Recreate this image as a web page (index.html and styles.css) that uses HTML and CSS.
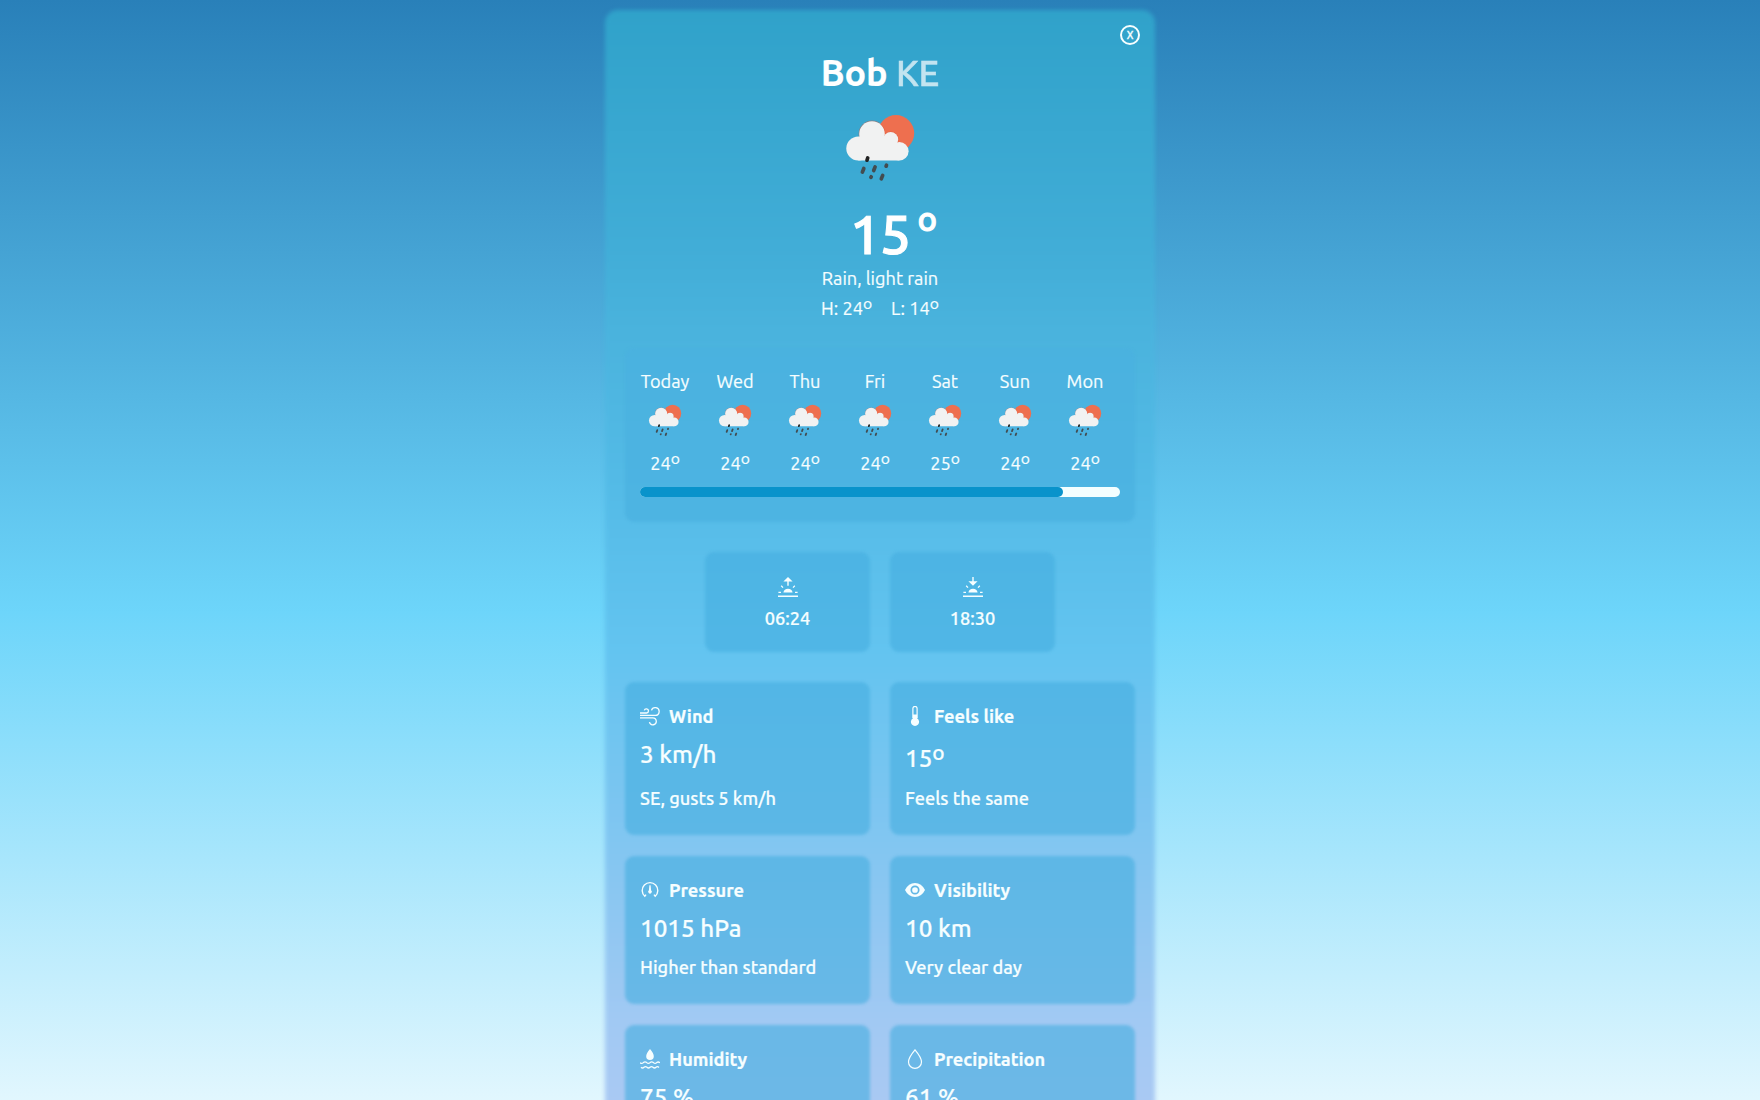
FILE: index.html
```html
<!DOCTYPE html>
<html lang="en">
<head>
<meta charset="utf-8">
<title>Weather</title>
<link rel="stylesheet" href="styles.css">
</head>
<body>
<svg class="sprite" aria-hidden="true">
  <symbol id="rain" viewBox="0 0 80 80">
    <circle cx="56" cy="28.3" r="18.2" fill="#ee6f4f"/>
    <g fill="#d9583a" opacity=".5"><circle cx="32" cy="29" r="13.4"/><circle cx="50.7" cy="34.5" r="8"/></g>
    <g fill="#f1f2f2"><circle cx="32" cy="29" r="12.8"/><circle cx="18.3" cy="43.4" r="12"/><circle cx="50.7" cy="34.5" r="7.5"/><circle cx="59.4" cy="46.2" r="9.2"/><path d="M18.3 34l22-4 6 2 10 5 3 18.4h-41z"/></g>
    <g stroke="#434c50" stroke-width="3.7" stroke-linecap="round"><path d="M27.7 53l-.7 2.2" stroke="#222"/><path d="M23.8 63.5l-1.4 3.6M35.1 61.9l-1.4 3.6M46.5 60.2l-.4 1M31.2 71.8l-.3.6M42.7 70.4l-1.4 3.4"/></g>
  </symbol>
</svg>
<main class="panel">
  <button class="close" aria-label="Close">X</button>
  <header class="summary">
    <h1 class="place">Bob <span class="country">KE</span></h1>
    <svg class="hero-icon"><use href="#rain"/></svg>
    <div class="temp">15<span class="deg">o</span></div>
    <p class="desc">Rain, light rain</p>
    <p class="range"><span>H: 24<sup>o</sup></span><span>L: 14<sup>o</sup></span></p>
  </header>
  <section class="box forecast">
    <div class="days">
      <div class="day"><span>Today</span><svg><use href="#rain"/></svg><span class="num">24<sup>o</sup></span></div>
      <div class="day"><span>Wed</span><svg><use href="#rain"/></svg><span class="num">24<sup>o</sup></span></div>
      <div class="day"><span>Thu</span><svg><use href="#rain"/></svg><span class="num">24<sup>o</sup></span></div>
      <div class="day"><span>Fri</span><svg><use href="#rain"/></svg><span class="num">24<sup>o</sup></span></div>
      <div class="day"><span>Sat</span><svg><use href="#rain"/></svg><span class="num">25<sup>o</sup></span></div>
      <div class="day"><span>Sun</span><svg><use href="#rain"/></svg><span class="num">24<sup>o</sup></span></div>
      <div class="day"><span>Mon</span><svg><use href="#rain"/></svg><span class="num">24<sup>o</sup></span></div>
    </div>
    <div class="track"><div class="thumb" style="width:88.2%"></div></div>
  </section>
  <section class="sun">
    <div class="box sun-card">
      <svg class="icon" viewBox="0 0 20 20"><path d="M10 0l4.6 4.6h-3.9v4.2H9.3V4.6H5.4zM5.4 15.4a4.7 4.7 0 0 1 9.2 0zM0 18.4h20v1.5H0z" fill="currentColor"/><path d="M.4 15.4H3M17 15.4h2.6M3.2 8.8l1.8 1.8M16.8 8.8L15 10.6" stroke="currentColor" stroke-width="1.3"/></svg>
      <span>06:24</span>
    </div>
    <div class="box sun-card">
      <svg class="icon" viewBox="0 0 20 20"><path d="M10 8.8l4.6-4.6h-3.9V0H9.3v4.2H5.4zM5.4 15.4a4.7 4.7 0 0 1 9.2 0zM0 18.4h20v1.5H0z" fill="currentColor"/><path d="M.4 15.4H3M17 15.4h2.6M3.2 8.8l1.8 1.8M16.8 8.8L15 10.6" stroke="currentColor" stroke-width="1.3"/></svg>
      <span>18:30</span>
    </div>
  </section>
  <section class="grid">
    <article class="box card tall">
      <h2><svg class="icon" viewBox="0 0 20 20" fill="none" stroke="currentColor" stroke-width="1.3"><path d="M0 7h6.5a2.1 2.1 0 1 0-2.200-2.600M0 9.4h15.300a3.9 3.9 0 1 0-3.8-5M0 11.8h12.800a3.500 3.500 0 1 1-3.4 4.400"/></svg>Wind</h2>
      <p class="value">3 km/h</p>
      <p class="note">SE, gusts 5 km/h</p>
    </article>
    <article class="box card tall">
      <h2><svg class="icon" viewBox="0 0 20 20"><path d="M7.9 12V2.5a2.1 2.1 0 0 1 4.2 0V12" fill="none" stroke="currentColor" stroke-width="1.2"/><path d="M7.9 8.5h4.2v3.8a4.1 4.1 0 1 1-4.2 0z" fill="currentColor"/></svg>Feels like</h2>
      <p class="value low">15<sup>o</sup></p>
      <p class="note">Feels the same</p>
    </article>
    <article class="box card">
      <h2><svg class="icon" viewBox="0 0 20 20"><path d="M6 14.6l-1.200 1.600a7.8 7.8 0 1 1 10.4 0l-1.200-1.600" fill="none" stroke="currentColor" stroke-width="1.4"/><path d="M9.4 5.2h1.2l.5 5.1a1.8 1.8 0 1 1-2.2 0z" fill="currentColor"/></svg>Pressure</h2>
      <p class="value">1015 hPa</p>
      <p class="note">Higher than standard</p>
    </article>
    <article class="box card">
      <h2><svg class="icon" viewBox="0 0 20 20"><path d="M0 10Q3.5 3 10 3t10 7q-3.5 7-10 7T0 10z" fill="currentColor"/><circle cx="10" cy="10" r="3.7" fill="none" stroke="#5fb6e5" stroke-width="1.7"/></svg>Visibility</h2>
      <p class="value">10 km</p>
      <p class="note">Very clear day</p>
    </article>
    <article class="box card">
      <h2><svg class="icon" viewBox="0 0 20 20"><path d="M10 0q3.800 4.400 3.800 7.200a3.800 3.800 0 0 1-7.600 0Q6.200 4.400 10 0z" fill="currentColor"/><path d="M0 13.6q1.7 1.6 3.4 0 1.6-1.3 3.3 0 1.7 1.6 3.4 0 1.6-1.3 3.3 0 1.7 1.6 3.3 0 1.6-1.3 3.3.2M1 18.2q1.5 1.5 3 .1 1.5-1.3 3 0 1.5 1.4 3 0 1.5-1.3 3 0 1.5 1.4 3 0 1.5-1.3 3 .1" fill="none" stroke="currentColor" stroke-width="1.3"/></svg>Humidity</h2>
      <p class="value">75 %</p>
      <p class="note">Dew point 11</p>
    </article>
    <article class="box card">
      <h2><svg class="icon" viewBox="0 0 20 20"><path d="M10 .8Q16.5 8.5 16.5 13a6.5 6.3 0 0 1-13 0Q3.5 8.500 10 .8z" fill="none" stroke="currentColor" stroke-width="1.2"/></svg>Precipitation</h2>
      <p class="value">61 %</p>
      <p class="note">Rain expected</p>
    </article>
  </section>
</main>
</body>
</html>
```
FILE: styles.css
```css
* { box-sizing: border-box; margin: 0; padding: 0; }

html { height: 1100px; overflow: hidden; }

body {
  height: 1100px;
  overflow: hidden;
  padding-top: 12px;
  background: linear-gradient(#2980b9, #6dd5fa 612px, #fff 1224px);
  color: #f6feff;
  font: 400 18.2px/20px Ubuntu, "Noto Sans", sans-serif;
  -webkit-text-stroke: .2px;
}

.sprite { display: none; }

.panel {
  position: relative;
  isolation: isolate;
  width: 546px;
  height: 1222px;
  margin: 0 auto;
  padding: 0 18px;
}

.panel::before {
  content: "";
  position: absolute;
  inset: -2px;
  z-index: -1;
  border-radius: 13px;
  background: linear-gradient(#30a2ca 0, #41add7 235px, #4ab3dd 320px, #54bbe7 480px, #63c4f0 640px, #83c6f1 840px, #a1c9f3 1010px, #a9c9f3 1090px);
  filter: blur(2px);
}

.close {
  position: absolute;
  top: 13px;
  right: 13px;
  width: 20px;
  height: 20px;
  border: 2px solid #f6feff;
  border-radius: 50%;
  background: none;
  color: #f6feff;
  font: 500 10.5px/15px Ubuntu, "Noto Sans", sans-serif;
  -webkit-text-stroke: .3px;
}

.summary {
  display: flex;
  flex-direction: column;
  align-items: center;
  height: 336px;
  padding-top: 38px;
}

.place { font-size: 36px; line-height: 46px; font-weight: 700; letter-spacing: -.15px; color: #fff; white-space: nowrap; }
.country { font-weight: 500; opacity: .7; -webkit-text-stroke: .5px; }

.hero-icon { width: 80px; height: 80px; margin-top: 9px; flex: none; }

.temp {
  display: flex;
  gap: 7px;
  padding-left: 26px;
  margin-top: 17px;
  font-size: 55px;
  line-height: 64px;
  font-weight: 500;
  letter-spacing: -.7px;
  color: #fff;
  -webkit-text-stroke: 1px;
}
.deg { font-size: 33px; line-height: 33px; }

.desc { margin-top: 2px; }
.range { display: flex; gap: 19px; margin-top: 10px; }

sup { font-size: .86em; line-height: 0; vertical-align: .36em; }

.box { position: relative; isolation: isolate; }

.box::before {
  content: "";
  position: absolute;
  inset: 0;
  z-index: -1;
  border-radius: 9px;
  background: rgba(68, 174, 224, .6);
  filter: blur(1.5px);
}

.forecast {
  height: 174px;
  padding: 23px 15px 0;
}
.forecast::before { background: rgba(74, 176, 224, .7); }

.days { display: grid; grid-template-columns: repeat(7, 50px); gap: 20px; }
.day { display: flex; flex-direction: column; align-items: center; }
.day svg { width: 38px; height: 38px; margin: 9px 0 15px; }

.track { height: 10px; margin-top: 14px; border-radius: 5px; background: #f3feff; }
.thumb { height: 100%; border-radius: 5px; background: #0993cb; }

.sun { display: flex; justify-content: center; gap: 20px; margin-top: 30px; }
.sun-card {
  display: flex;
  flex-direction: column;
  align-items: center;
  gap: 11px;
  width: 165px;
  height: 100px;
  padding-top: 25px;
  font-weight: 500;
}

.icon { width: 20px; height: 20px; flex: none; }

.grid { display: grid; grid-template-columns: 245px 245px; gap: 21px 20px; margin-top: 30px; }

.card { height: 148px; padding: 23px 15px; font-weight: 500; }
.card h2 { display: flex; align-items: center; gap: 9px; height: 22px; font-size: 18.2px; font-weight: 700; }
.value { margin-top: 12px; font-size: 24.2px; line-height: 30px; }
.note { margin-top: 14px; }

.tall { height: 153px; }
.tall .note { margin-top: 19px; }
.tall .low { margin-top: 16px; }
.tall .low + .note { margin-top: 15px; }
```
